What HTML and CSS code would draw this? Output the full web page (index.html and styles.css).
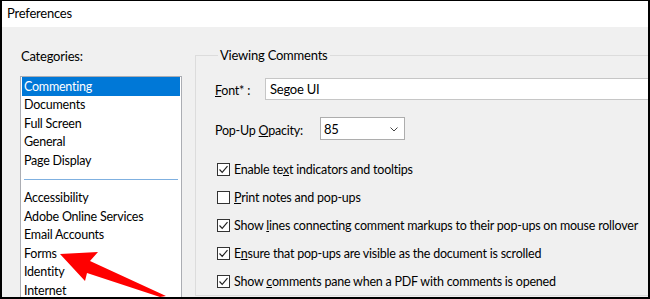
FILE: index.html
```html
<!DOCTYPE html>
<html lang="en">
<head>
  <meta charset="UTF-8" />
  <title>Preferences</title>
  <link rel="stylesheet" href="styles.css">
</head>
<body>

<div class="window">
  <div class="titlebar">Preferences</div>

  <div class="content">
    <!-- categories -->
    <div class="categories">
      <div class="cat-label">Categories:</div>
      <div class="listbox">
        <div class="item selected">Commenting</div>
        <div class="item">Documents</div>
        <div class="item">Full Screen</div>
        <div class="item">General</div>
        <div class="item">Page Display</div>
        <div class="sep"></div>
        <div class="item">Accessibility</div>
        <div class="item">Adobe Online Services</div>
        <div class="item">Email Accounts</div>
        <div class="item">Forms</div>
        <div class="item">Identity</div>
        <div class="item">Internet</div>
      </div>
    </div>

    <!-- viewing comments group -->
    <fieldset class="group">
      <legend>Viewing Comments</legend>

      <div class="row font-row">
        <span class="lbl font-lbl"><u>F</u>ont* :</span>
        <div class="textbox">Segoe UI</div>
      </div>

      <div class="row opacity-row">
        <span class="lbl opacity-lbl">Pop-Up <u>O</u>pacity:</span>
        <div class="select">
          <span>85</span>
          <svg class="chev" width="8" height="5" viewBox="0 0 8 5"><polyline points="0.5,0.5 4,4 7.5,0.5" fill="none" stroke="#444" stroke-width="1"/></svg>
        </div>
      </div>

      <div class="checks">
        <div class="check">
          <span class="box on"><svg width="11" height="11" viewBox="0 0 11 11"><polyline points="1.5,5.5 4.2,8.3 9.5,2.2" fill="none" stroke="#222" stroke-width="1.2"/></svg></span>
          <span>Enable te<u>x</u>t indicators and tooltips</span>
        </div>
        <div class="check">
          <span class="box"></span>
          <span><u>P</u>rint notes and pop-ups</span>
        </div>
        <div class="check">
          <span class="box on"><svg width="11" height="11" viewBox="0 0 11 11"><polyline points="1.5,5.5 4.2,8.3 9.5,2.2" fill="none" stroke="#222" stroke-width="1.2"/></svg></span>
          <span>Show <u>l</u>ines connecting comment markups to their pop-ups on mouse rollover</span>
        </div>
        <div class="check">
          <span class="box on"><svg width="11" height="11" viewBox="0 0 11 11"><polyline points="1.5,5.5 4.2,8.3 9.5,2.2" fill="none" stroke="#222" stroke-width="1.2"/></svg></span>
          <span>E<u>n</u>sure that pop-ups are visible as the document is scrolled</span>
        </div>
        <div class="check">
          <span class="box on"><svg width="11" height="11" viewBox="0 0 11 11"><polyline points="1.5,5.5 4.2,8.3 9.5,2.2" fill="none" stroke="#222" stroke-width="1.2"/></svg></span>
          <span>Show <u>c</u>omments pane when a PDF with comments is opened</span>
        </div>
      </div>
    </fieldset>
  </div>

  <!-- red pointer arrow drawn over the list -->
  <svg class="arrow" width="650" height="299" viewBox="0 0 650 299">
    <polygon points="60,254 98,252 90,261 166,296 160,297 87,273 85,281" fill="#f00"/>
  </svg>
</div>

</body>
</html>
```

FILE: styles.css
```css
* { box-sizing: border-box; }
body {
  margin: 0;
  font-family: 'Lato', 'Liberation Sans', sans-serif;
  font-size: 12.5px;
  letter-spacing: -0.22px;
  color: #000;
}
.window {
  position: relative;
  width: 650px;
  height: 299px;
  overflow: hidden;
  border-top: 1px solid #000;
  border-left: 2px solid #000;
  border-right: 2px solid #000;
  border-bottom: 2px solid #000;
  background-color: #f0f0f0;
}
.titlebar {
  height: 26px;
  line-height: 25px;
  padding-left: 5px;
  background-color: #fff;
  font-size: 13px;
}
.content {
  display: flex;
  align-items: flex-start;
}

/* categories list */
.categories {
  width: 162px;
  margin-left: 18px;
  padding-top: 20px;
  flex-shrink: 0;
}
.cat-label {
  line-height: 18px;
  padding-left: 1px;
  margin-bottom: 11px;
  font-size: 13px;
}
.listbox {
  background-color: #fff;
  border: 1px solid #abadb3;
  height: 260px;
  padding: 0 1px;
}
.item {
  height: 18.6px;
  line-height: 18.6px;
  padding-left: 2px;
  white-space: nowrap;
}
.item.selected {
  background-color: #0078d7;
  color: #fff;
  height: 19px;
  line-height: 19px;
}
.sep {
  height: 18.6px;
  padding: 9px 2px 0;
}
.sep::after {
  content: "";
  display: block;
  height: 1px;
  background-color: #7fb0e0;
}

/* group box */
.group {
  margin: 19px 0 0 13px;
  padding: 0 0 0 19px;
  border: 1px solid #dcdcdc;
  width: 520px;
  flex-shrink: 0;
  min-width: 0;
}
.group legend {
  padding: 0 2px;
  margin-left: 3px;
  line-height: 18px;
  font-size: 13px;
}
.row {
  display: flex;
  align-items: center;
}
.lbl {
  white-space: nowrap;
  padding-top: 3px;
}
.font-row {
  margin-top: 14px;
  height: 22px;
}
.font-lbl {
  width: 50px;
}
.textbox {
  flex: 1;
  height: 22px;
  line-height: 20px;
  border: 1px solid #c6c6c6;
  background-color: #fff;
  padding-left: 4px;
  font-size: 13px;
}
.opacity-row {
  margin-top: 17px;
  height: 23px;
}
.opacity-lbl {
  width: 105px;
}
.select {
  width: 85px;
  height: 23px;
  border: 1px solid #adadad;
  background-color: #fff;
  display: flex;
  align-items: center;
  justify-content: space-between;
  padding: 0 6px 0 3px;
  font-size: 13px;
}
.chev {
  margin-top: 1px;
}

/* checkboxes */
.checks {
  margin-top: 15px;
}
.check {
  display: flex;
  align-items: center;
  height: 28px;
  padding-left: 2px;
  white-space: nowrap;
}
.box {
  width: 13px;
  height: 13px;
  border: 1px solid #333;
  background-color: #fff;
  margin-right: 4px;
  display: flex;
  align-items: center;
  justify-content: center;
  flex-shrink: 0;
}
.check u, .lbl u {
  text-underline-offset: 1px;
}

.arrow {
  position: absolute;
  left: -2px;
  top: -1px;
  pointer-events: none;
}
```
